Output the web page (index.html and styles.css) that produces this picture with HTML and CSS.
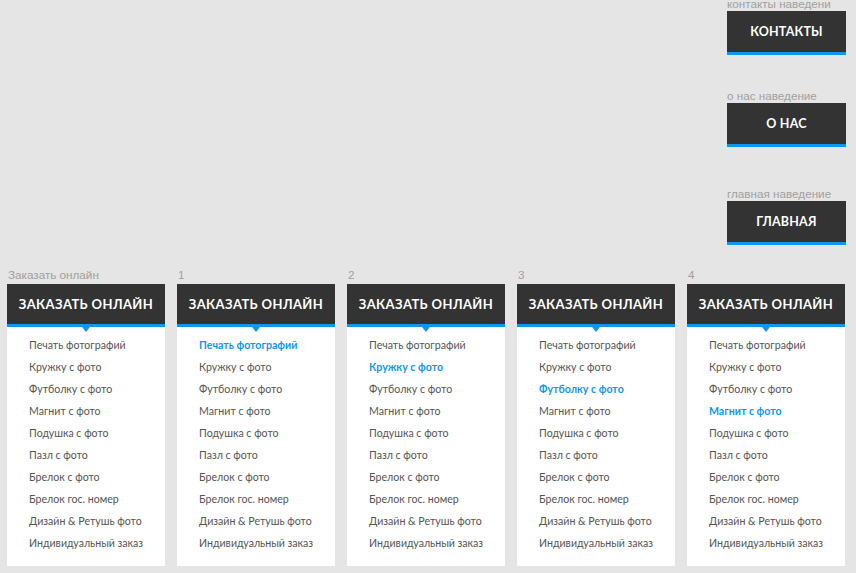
FILE: index.html
```html
<!DOCTYPE html>
<html lang="ru">
<head>
<meta charset="utf-8">
<title>Меню</title>
<link rel="stylesheet" href="styles.css">
</head>
<body>
<div class="page">
  <div class="nav-stack">
    <div class="nav-item nav-first">
      <div class="label">контакты наведени</div>
      <div class="btn">КОНТАКТЫ</div>
    </div>
    <div class="nav-item nav-second">
      <div class="label">о нас наведение</div>
      <div class="btn">О НАС</div>
    </div>
    <div class="nav-item nav-third">
      <div class="label">главная наведение</div>
      <div class="btn">ГЛАВНАЯ</div>
    </div>
  </div>

  <div class="menus">
    <div class="menu">
      <div class="label">Заказать онлайн</div>
      <div class="menu-head">ЗАКАЗАТЬ ОНЛАЙН<span class="arrow"></span></div>
      <ul class="menu-list">
        <li>Печать фотографий</li>
        <li>Кружку с фото</li>
        <li>Футболку с фото</li>
        <li>Магнит с фото</li>
        <li>Подушка с фото</li>
        <li>Пазл с фото</li>
        <li>Брелок с фото</li>
        <li>Брелок гос. номер</li>
        <li>Дизайн &amp; Ретушь фото</li>
        <li>Индивидуальный заказ</li>
      </ul>
    </div>
    <div class="menu">
      <div class="label">1</div>
      <div class="menu-head">ЗАКАЗАТЬ ОНЛАЙН<span class="arrow"></span></div>
      <ul class="menu-list">
        <li class="active">Печать фотографий</li>
        <li>Кружку с фото</li>
        <li>Футболку с фото</li>
        <li>Магнит с фото</li>
        <li>Подушка с фото</li>
        <li>Пазл с фото</li>
        <li>Брелок с фото</li>
        <li>Брелок гос. номер</li>
        <li>Дизайн &amp; Ретушь фото</li>
        <li>Индивидуальный заказ</li>
      </ul>
    </div>
    <div class="menu">
      <div class="label">2</div>
      <div class="menu-head">ЗАКАЗАТЬ ОНЛАЙН<span class="arrow"></span></div>
      <ul class="menu-list">
        <li>Печать фотографий</li>
        <li class="active">Кружку с фото</li>
        <li>Футболку с фото</li>
        <li>Магнит с фото</li>
        <li>Подушка с фото</li>
        <li>Пазл с фото</li>
        <li>Брелок с фото</li>
        <li>Брелок гос. номер</li>
        <li>Дизайн &amp; Ретушь фото</li>
        <li>Индивидуальный заказ</li>
      </ul>
    </div>
    <div class="menu">
      <div class="label">3</div>
      <div class="menu-head">ЗАКАЗАТЬ ОНЛАЙН<span class="arrow"></span></div>
      <ul class="menu-list">
        <li>Печать фотографий</li>
        <li>Кружку с фото</li>
        <li class="active">Футболку с фото</li>
        <li>Магнит с фото</li>
        <li>Подушка с фото</li>
        <li>Пазл с фото</li>
        <li>Брелок с фото</li>
        <li>Брелок гос. номер</li>
        <li>Дизайн &amp; Ретушь фото</li>
        <li>Индивидуальный заказ</li>
      </ul>
    </div>
    <div class="menu">
      <div class="label">4</div>
      <div class="menu-head">ЗАКАЗАТЬ ОНЛАЙН<span class="arrow"></span></div>
      <ul class="menu-list">
        <li>Печать фотографий</li>
        <li>Кружку с фото</li>
        <li>Футболку с фото</li>
        <li class="active">Магнит с фото</li>
        <li>Подушка с фото</li>
        <li>Пазл с фото</li>
        <li>Брелок с фото</li>
        <li>Брелок гос. номер</li>
        <li>Дизайн &amp; Ретушь фото</li>
        <li>Индивидуальный заказ</li>
      </ul>
    </div>
  </div>
</div>
</body>
</html>
```

FILE: styles.css
```css
html, body {
  margin: 0;
  padding: 0;
  background: #e5e5e5;
}
body {
  width: 856px;
  height: 573px;
  overflow: hidden;
  font-family: Lato, "Noto Sans", sans-serif;
}
.page {
  display: flex;
  flex-direction: column;
}
.label {
  font-family: "Liberation Sans", Arial, sans-serif;
  font-size: 11.7px;
  line-height: 14px;
  height: 14px;
  color: #a0a0a0;
  white-space: nowrap;
  padding-left: 1px;
}
.nav-stack {
  align-self: flex-end;
  width: 119px;
  margin-right: 10px;
  margin-top: -3px;
  display: flex;
  flex-direction: column;
}
.nav-second { margin-top: 34px; }
.nav-third { margin-top: 40px; }
.nav-stack .label { padding-left: 0; }
.btn {
  height: 41px;
  background: #333333;
  border-bottom: 3px solid #1196f0;
  color: #ffffff;
  font-weight: 700;
  font-size: 12.5px;
  letter-spacing: 0.2px;
  display: flex;
  align-items: center;
  justify-content: center;
}
.menus {
  display: grid;
  grid-template-columns: repeat(5, 158px);
  column-gap: 12px;
  margin-left: 7px;
  margin-top: 23px;
}
.menu .label { margin-bottom: 2px; }
.menu-head {
  position: relative;
  height: 40px;
  background: #333333;
  border-bottom: 3px solid #1196f0;
  color: #ffffff;
  font-weight: 700;
  font-size: 13px;
  letter-spacing: 0.4px;
  display: flex;
  align-items: center;
  justify-content: center;
}
.arrow {
  position: absolute;
  left: 50%;
  bottom: -8px;
  margin-left: -4px;
  width: 0;
  height: 0;
  border-left: 4px solid transparent;
  border-right: 4px solid transparent;
  border-top: 5px solid #1196f0;
}
.menu-list {
  list-style: none;
  margin: 0;
  padding: 7px 0 12px 22px;
  background: #ffffff;
}
.menu-list li {
  font-size: 10.6px;
  line-height: 22px;
  height: 22px;
  color: #555555;
  white-space: nowrap;
}
.menu-list li.active {
  color: #1196f0;
  font-weight: 700;
}
```
